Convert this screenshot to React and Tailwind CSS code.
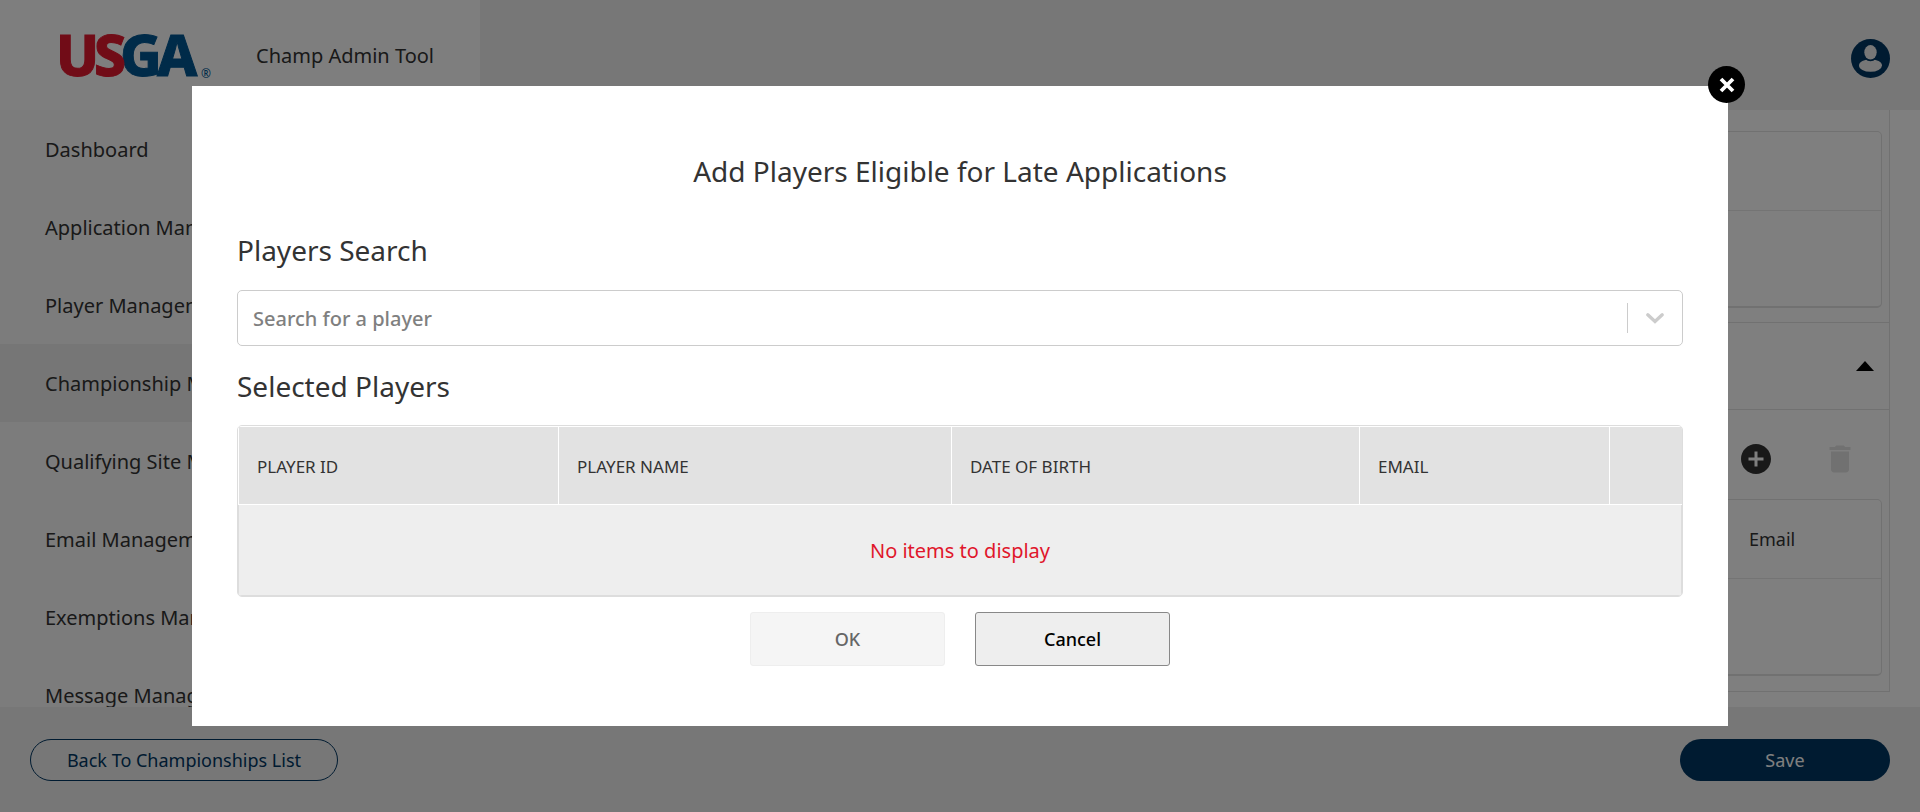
import React from "react";
import { MdAddCircle, MdDelete } from "react-icons/md";

const menu = [
  "Dashboard",
  "Application Management",
  "Player Management",
  "Championship Management",
  "Qualifying Site Management",
  "Email Management",
  "Exemptions Management",
  "Message Management",
];

function Logo() {
  return (
    <svg width="156" height="46" viewBox="0 0 156 46" role="img" aria-label="USGA">
      <g fontFamily="'Noto Sans', sans-serif" fontWeight="800" fontSize="57" strokeWidth="1">
        <text x="-4" y="43" fill="#e2192f" stroke="#e2192f">U</text>
        <text x="60" y="43" fill="#005692" stroke="#005692">G</text>
        <text x="97" y="43" fill="#005692" stroke="#005692">A</text>
        <text x="34" y="43" fill="#e2192f" stroke="#e2192f">S</text>
      </g>
      <text x="141" y="45" fontFamily="'Noto Sans', sans-serif" fontSize="12" fontWeight="500" fill="#005692">®</text>
    </svg>
  );
}

function UserIcon() {
  return (
    <svg width="39" height="39" viewBox="0 0 39 39" aria-hidden="true">
      <circle cx="19.5" cy="19.5" r="19.5" fill="#003662" />
      <ellipse cx="19.5" cy="26.5" rx="11.5" ry="6.3" fill="#eee" />
      <ellipse cx="19.5" cy="13.3" rx="7.5" ry="9" fill="#003662" />
      <ellipse cx="19.5" cy="13.3" rx="6.2" ry="7.2" fill="#eee" />
    </svg>
  );
}

function Card({ heading }) {
  return (
    <div className="rounded-[5px] border border-b-2 border-[#e2e2e2]">
      <div className="flex h-[79px] items-center justify-end border-b border-[#e8e8e8]">
        <div className="w-[132px] text-lg">{heading}</div>
      </div>
      <div className="h-[95px]" />
    </div>
  );
}

function Page() {
  return (
    <div className="flex h-screen flex-col bg-white text-[#333]">
      <header className="flex h-[110px] shrink-0 bg-[#eee]">
        <div className="flex w-[480px] items-center gap-[40px] bg-[#fcfcfc] pt-[2px] pl-[60px] text-xl">
          <a href="#home" className="block">
            <Logo />
          </a>
          <span>Champ Admin Tool</span>
        </div>
        <div className="flex grow items-center justify-end pt-[7px] pr-[30px]">
          <button type="button" aria-label="Account">
            <UserIcon />
          </button>
        </div>
      </header>

      <div className="flex min-h-0 grow">
        <nav className="w-[480px] shrink-0 overflow-hidden bg-[#f8f8f8]">
          {menu.map((label) => (
            <a
              key={label}
              href="#section"
              className={`flex h-[78px] items-center pt-[2px] pl-[45px] text-xl ${
                label === "Championship Management" ? "bg-[#ececec]" : ""
              }`}
            >
              {label}
            </a>
          ))}
        </nav>
        <main className="grow overflow-hidden pr-[30px] pl-[30px]">
          <div className="border-x border-b border-[#e2e2e2]">
            <div className="border-b border-[#e2e2e2] px-[7px] pt-[21px] pb-[14px]">
              <Card />
            </div>
            <div className="flex h-[87px] items-center justify-end border-b border-[#e2e2e2] pr-[15px]">
              <button type="button" aria-label="Collapse section">
                <svg width="18" height="10" viewBox="0 0 18 10" aria-hidden="true">
                  <path d="M0 10 9 0l9 10z" fill="#000" />
                </svg>
              </button>
            </div>
            <div className="px-[7px] pb-[15px]">
              <div className="flex h-[89px] items-center justify-end gap-[48px] pt-[9px] pr-[24px]">
                <button type="button" aria-label="Add">
                  <MdAddCircle size={36} color="#333" />
                </button>
                <button type="button" aria-label="Delete" disabled>
                  <MdDelete size={36} color="#e2e2e2" />
                </button>
              </div>
              <Card heading="Email" />
            </div>
          </div>
        </main>
      </div>

      <footer className="flex h-[105px] shrink-0 items-center justify-between bg-[#eee] px-[30px] text-lg">
        <button type="button" className="h-[42px] w-[308px] rounded-full border border-[#003662] text-[#003662]">
          Back To Championships List
        </button>
        <button type="button" className="h-[42px] w-[210px] rounded-full bg-[#003662] text-white">
          Save
        </button>
      </footer>
    </div>
  );
}

const th = "h-[79px] border-y border-l border-white bg-[#e2e2e2] pt-[3px] pl-[18px] text-left text-[17px] font-normal";

function Modal() {
  return (
    <section
      role="dialog"
      aria-modal="true"
      aria-labelledby="dialog-title"
      className="relative w-4/5 bg-white px-[45px] pt-[67px] pb-[60px] text-[#333]"
    >
      <button
        type="button"
        aria-label="Close"
        className="absolute -top-[20px] -right-[17px] flex size-[37px] items-center justify-center rounded-full bg-black"
      >
        <svg width="16" height="16" viewBox="0 0 16 16" aria-hidden="true">
          <path d="M2 2l12 12M14 2 2 14" stroke="#fff" strokeWidth="3.8" />
        </svg>
      </button>

      <h1 id="dialog-title" className="mb-[43px] text-center text-[28px] leading-9">
        Add Players Eligible for Late Applications
      </h1>

      <label htmlFor="player-search" className="mb-[22px] block text-[28px] leading-9">
        Players Search
      </label>
      <div className="mb-[22px] flex h-[56px] items-center rounded-[5px] border border-[#ccc]">
        <input
          id="player-search"
          type="text"
          placeholder="Search for a player"
          className="h-full min-w-0 grow bg-transparent pl-[15px] text-xl font-medium outline-none placeholder:text-[#808080]"
        />
        <span className="h-[30px] w-px bg-[#ccc]" />
        <button type="button" aria-label="Show players" className="flex h-full w-[54px] items-center justify-center">
          <svg width="20" height="12" viewBox="0 0 20 12" fill="none" aria-hidden="true">
            <path d="M2.8 2.8 10 9.400l7.200-6.600" stroke="#ccc" strokeWidth="3.4" strokeLinecap="round" />
          </svg>
        </button>
      </div>

      <h2 className="mb-[21px] text-[28px] leading-9">Selected Players</h2>
      <div className="mb-[15px] overflow-hidden rounded-[5px] border border-[#ddd]">
        <table className="w-full table-fixed border-separate border-spacing-0">
          <colgroup>
            <col className="w-[320px]" />
            <col className="w-[393px]" />
            <col className="w-[408px]" />
            <col className="w-[250px]" />
            <col className="w-[73px]" />
          </colgroup>
          <thead>
            <tr>
              <th scope="col" className={th}>PLAYER ID</th>
              <th scope="col" className={th}>PLAYER NAME</th>
              <th scope="col" className={th}>DATE OF BIRTH</th>
              <th scope="col" className={th}>EMAIL</th>
              <td className={th} />
            </tr>
          </thead>
          <tbody>
            <tr>
              <td
                colSpan={5}
                className="h-[91px] border-x border-b border-[#ddd] bg-[#eee] pt-[2px] text-center text-xl text-[#e0162b]"
              >
                No items to display
              </td>
            </tr>
          </tbody>
        </table>
      </div>

      <div className="flex justify-center gap-[30px] text-lg font-medium">
        <button
          type="button"
          disabled
          className="h-[54px] w-[195px] rounded-[3px] border border-[#eee] bg-[#f5f5f5] text-[#666]"
        >
          OK
        </button>
        <button type="button" className="h-[54px] w-[195px] rounded-[3px] border border-[#888] bg-[#eee] text-black">
          Cancel
        </button>
      </div>
    </section>
  );
}

export default function App() {
  return (
    <div className="font-['Noto_Sans',sans-serif]">
      <Page />
      <div className="fixed inset-0 flex items-center justify-center bg-black/50">
        <Modal />
      </div>
    </div>
  );
}
